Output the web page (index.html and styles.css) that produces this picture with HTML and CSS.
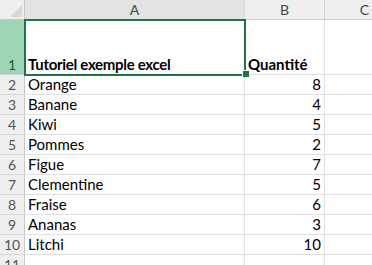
FILE: index.html
```html
<!DOCTYPE html>
<html lang="fr">
<head>
<meta charset="utf-8">
<title>Tutoriel exemple excel</title>
<link rel="stylesheet" href="styles.css">
</head>
<body>
<div class="sheet">
  <div class="corner"><span class="tri"></span></div>
  <div class="colhead sel">A</div>
  <div class="colhead">B</div>
  <div class="colhead last">C</div>

  <div class="rowhead sel">1</div>
  <div class="cell a1 bold bottom"><span class="title">Tutoriel exemple excel</span><span class="selection"></span><span class="handle"></span></div>
  <div class="cell bold bottom">Quantité</div>
  <div class="cell"></div>

  <div class="rowhead">2</div><div class="cell">Orange</div><div class="cell num">8</div><div class="cell"></div>
  <div class="rowhead">3</div><div class="cell">Banane</div><div class="cell num">4</div><div class="cell"></div>
  <div class="rowhead">4</div><div class="cell">Kiwi</div><div class="cell num">5</div><div class="cell"></div>
  <div class="rowhead">5</div><div class="cell">Pommes</div><div class="cell num">2</div><div class="cell"></div>
  <div class="rowhead">6</div><div class="cell">Figue</div><div class="cell num">7</div><div class="cell"></div>
  <div class="rowhead">7</div><div class="cell">Clementine</div><div class="cell num">5</div><div class="cell"></div>
  <div class="rowhead">8</div><div class="cell">Fraise</div><div class="cell num">6</div><div class="cell"></div>
  <div class="rowhead">9</div><div class="cell">Ananas</div><div class="cell num">3</div><div class="cell"></div>
  <div class="rowhead">10</div><div class="cell">Litchi</div><div class="cell num">10</div><div class="cell"></div>
  <div class="rowhead">11</div><div class="cell"></div><div class="cell"></div><div class="cell"></div>
</div>
</body>
</html>
```

FILE: styles.css
```css
html, body {
  margin: 0;
  padding: 0;
  background: #ffffff;
  overflow: hidden;
}

.sheet {
  display: grid;
  grid-template-columns: 25px 220px 80px 80px;
  grid-template-rows: 20px 55px repeat(10, 20px);
  font-family: Lato, "Liberation Sans", sans-serif;
  font-size: 15px;
  color: #000;
}

.corner {
  position: relative;
  background: #efefef;
  border-right: 1px solid #c8c8c8;
  border-bottom: 1px solid #c8c8c8;
  box-sizing: border-box;
}

.tri {
  position: absolute;
  left: 10px;
  top: 5px;
  width: 0;
  height: 0;
  border-left: 12px solid transparent;
  border-bottom: 12px solid #d9d9d9;
}

.colhead {
  background: #efefef;
  color: #444;
  font-size: 14px;
  display: flex;
  align-items: center;
  justify-content: center;
  border-right: 1px solid #d6d6d6;
  border-bottom: 1px solid #c8c8c8;
  box-sizing: border-box;
}

.colhead.sel {
  background: #e3e3e3;
  color: #185c37;
}

.rowhead {
  background: #efefef;
  color: #555;
  font-size: 14px;
  display: flex;
  align-items: flex-end;
  justify-content: center;
  padding-bottom: 1px;
  border-right: 1px solid #c8c8c8;
  border-bottom: 1px solid #d6d6d6;
  box-sizing: border-box;
}

.rowhead.sel {
  background: #9fd5b7;
  color: #185c37;
}

.cell {
  display: flex;
  align-items: flex-end;
  padding: 0 3px 1px 3px;
  border-right: 1px solid #e1e1e1;
  border-bottom: 1px solid #e1e1e1;
  box-sizing: border-box;
  white-space: nowrap;
  line-height: 18px;
}

.bold {
  font-weight: bold;
}

.title {
  letter-spacing: -0.3px;
}

.num {
  justify-content: flex-end;
}

.a1 {
  position: relative;
}

.selection {
  position: absolute;
  left: -1px;
  top: -1px;
  width: 222px;
  height: 57px;
  border: 2px solid #217346;
  box-sizing: border-box;
  pointer-events: none;
}

.handle {
  position: absolute;
  left: 217px;
  top: 50px;
  width: 6px;
  height: 6px;
  background: #217346;
  border-left: 1px solid #fff;
  border-top: 1px solid #fff;
}
```
